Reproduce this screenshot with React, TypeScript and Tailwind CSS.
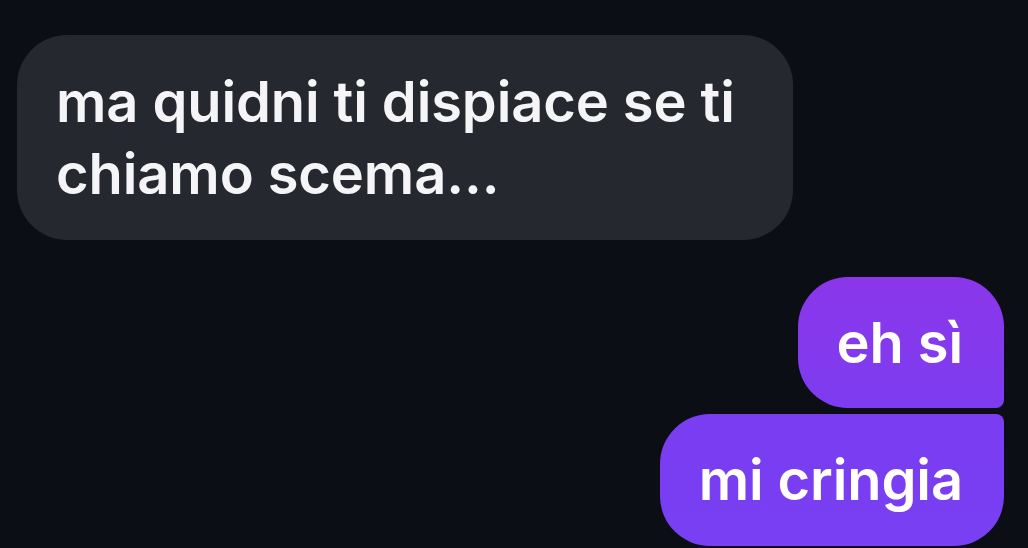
const App = () => {
  return (
    <div className="min-h-[548px] w-full bg-[#0b0e14] font-['Inter','Liberation_Sans',sans-serif] text-white overflow-hidden">
      <div className="flex flex-col pt-[35px]">
        {/* incoming */}
        <div className="ml-[17px] w-[776px] rounded-[50px] bg-[#25282e] px-[39px] pt-[31px] pb-[30px]">
          <p className="text-[56px] font-semibold leading-[72px] tracking-[-0.1px] text-[#f5f5f7]">
            ma quidni ti dispiace se ti
            <br />
            chiamo scema...
          </p>
        </div>

        {/* outgoing */}
        <div className="mt-[37px] mr-[24px] flex flex-col items-end gap-[6px]">
          <div className="h-[131px] rounded-tl-[50px] rounded-tr-[50px] rounded-bl-[50px] rounded-br-[8px] bg-gradient-to-b from-[#8b36ea] to-[#7d3cf0] pl-[39px] pr-[41px] flex items-center">
            <span className="text-[56px] font-semibold leading-[72px] tracking-[-0.1px]">eh sì</span>
          </div>
          <div className="h-[132px] rounded-tl-[50px] rounded-tr-[8px] rounded-bl-[50px] rounded-br-[50px] bg-gradient-to-b from-[#7b3df1] to-[#783ff3] pl-[39px] pr-[41px] flex items-center">
            <span className="text-[56px] font-semibold leading-[72px] tracking-[-0.1px]">mi cringia</span>
          </div>
        </div>
      </div>
    </div>
  );
};

export default App;
